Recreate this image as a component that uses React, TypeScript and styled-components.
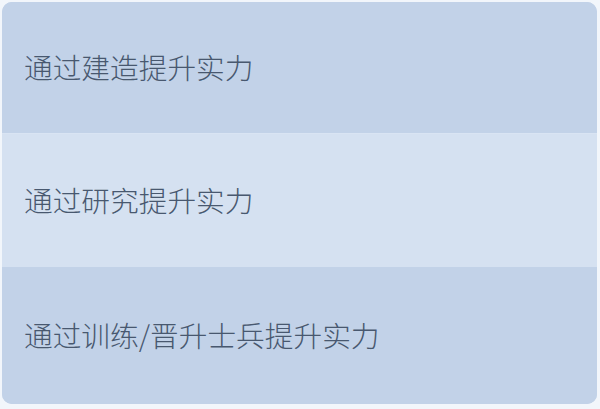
import React from "react";
import styled, { createGlobalStyle } from "styled-components";

const GlobalStyle = createGlobalStyle`
  html, body {
    margin: 0;
    padding: 0;
    background: #f2f6fb;
  }
  body {
    font-family: "Noto Sans CJK SC", "Noto Sans", sans-serif;
  }
`;

const Wrapper = styled.div`
  width: 600px;
  height: 409px;
  padding: 2px 3px 5px 2px;
  box-sizing: border-box;
`;

const Card = styled.ul`
  list-style: none;
  margin: 0;
  padding: 0;
  height: 100%;
  display: flex;
  flex-direction: column;
  border-radius: 10px;
  overflow: hidden;
  background: #c2d2e8;
`;

const Row = styled.li<{ $light?: boolean; $h: number }>`
  flex: 0 0 ${({ $h }) => $h}px;
  display: flex;
  align-items: center;
  padding-left: 22px;
  background: ${({ $light }) => ($light ? "#d5e1f1" : "#c2d2e8")};
  border-top: ${({ $light }) => ($light ? "1px solid #d9e4f3" : "none")};
  box-sizing: border-box;
`;

const Label = styled.span`
  font-size: 28.7px;
  font-weight: 300;
  line-height: 1;
  color: #48586f;
`;

const items = [
  { text: "通过建造提升实力", h: 131 },
  { text: "通过研究提升实力", h: 134, light: true },
  { text: "通过训练/晋升士兵提升实力", h: 137 },
];

export default function App() {
  return (
    <>
      <GlobalStyle />
      <Wrapper>
        <Card>
          {items.map((item) => (
            <Row key={item.text} $light={item.light} $h={item.h}>
              <Label>{item.text}</Label>
            </Row>
          ))}
        </Card>
      </Wrapper>
    </>
  );
}
